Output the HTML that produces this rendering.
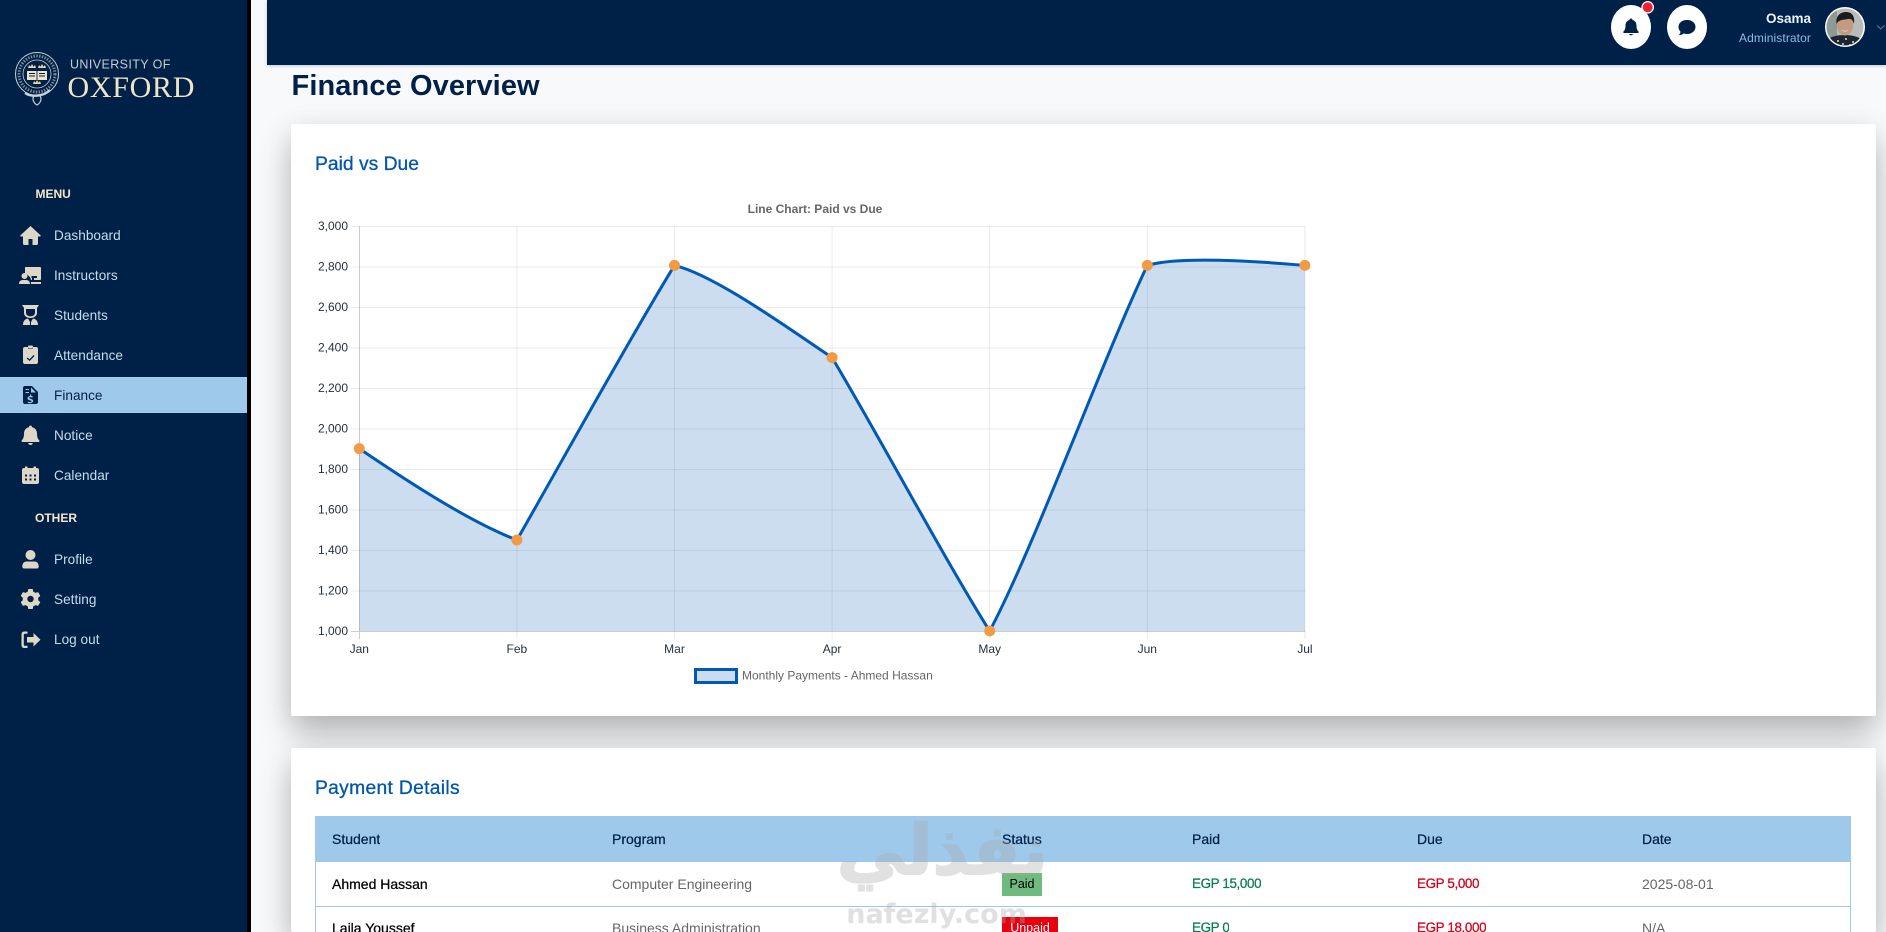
<!DOCTYPE html>
<html lang="en">
<head>
<meta charset="utf-8">
<title>Finance Overview</title>
<style>
html,body{margin:0;padding:0;width:1886px;height:932px;overflow:hidden;background:#f8f9fb;font-family:"Liberation Sans",Arial,sans-serif}
#wrap{position:relative;width:1886px;height:932px;overflow:hidden;background:#f8f9fb}
.a{position:absolute}
.t{position:absolute;white-space:nowrap;line-height:20px;height:20px;overflow:hidden}
#side{left:0;top:0;width:247px;height:932px;background:#002147;z-index:5}
#strip{left:247px;top:0;width:4px;height:932px;background:#000;z-index:5}
#top{left:267px;top:0;width:1619px;height:65px;background:#002147;z-index:4;box-shadow:0 1px 3px rgba(0,60,120,.25)}
.card{background:#fff;left:291px;width:1585px;border-radius:2px;box-shadow:0 18px 32px rgba(0,0,0,.26),0 0 30px rgba(0,0,0,.05)}
.nav{left:54px;font-size:13.6px;color:#c6dcee;letter-spacing:.02px;z-index:6}
.sec{font-size:12px;font-weight:bold;color:#f5e6cc;z-index:6}
.h2{left:315px;font-size:19.3px;color:#0056a8;-webkit-text-stroke:.3px #0056a8;height:24px;line-height:24px}
.th{font-size:14px;color:#002147;-webkit-text-stroke:.25px #002147;top:829px;z-index:2}
.td{font-size:14px;z-index:2;color:#666}
.st{color:#000;-webkit-text-stroke:.25px #000}
.gr{color:#0a7d50;-webkit-text-stroke:.25px #0a7d50;font-size:13.4px;letter-spacing:-.35px}
.rd{color:#d0021b;-webkit-text-stroke:.25px #d0021b;font-size:13.4px;letter-spacing:-.35px}
.circ{width:40px;height:44px;border-radius:50%;background:#fff;top:5px;z-index:6}
svg text{font-family:"Liberation Sans",Arial,sans-serif}
</style>
</head>
<body>
<div id="wrap">
<div class="a" id="side"></div>
<div class="a" id="strip"></div>
<div class="a" id="top"></div>

<div class="a card" style="top:124px;height:592px"></div>
<div class="a card" style="top:748px;height:184px"></div>

<div class="t" style="left:291.500px;top:70px;height:32px;line-height:32px;font-size:29px;font-weight:bold;color:#002147;letter-spacing:.1px">Finance Overview</div>
<div class="t h2" style="top:153px">Paid vs Due</div>
<div class="t h2" style="top:776.500px;letter-spacing:.3px">Payment Details</div>

<!-- Chart -->
<svg class="a" style="left:0;top:0;z-index:1" width="1886" height="932" viewBox="0 0 1886 932">
  <g stroke="rgba(0,0,0,.08)" stroke-width="1" fill="none">
    <path d="M351 226.5H1305M351 267H1305M351 307.5H1305M351 348H1305M351 388.5H1305M351 429H1305M351 469.5H1305M351 510H1305M351 550.5H1305M351 591H1305"/>
    <path d="M516.9 226V639M674.5 226V639M832.1 226V639M989.7 226V639M1147.3 226V639M1304.9 226V639"/>
  </g>
  <path d="M359.5 226V639M351 631.5H1305" stroke="rgba(0,0,0,.2)" stroke-width="1" fill="none"/>
  <path fill="rgba(0,86,179,.2)" d="M359.3 448.6C410 483 470 522 516.9 540C557 470 634.5 330 674.5 265.4C715 275 790 329.5 832.1 357.6C880 438 945 560 989.7 631C1034.7 546 1102.3 360 1147.3 265.4C1172 258 1225 258.500 1304.9 265.4L1304.9 631L359.3 631Z"/>
  <path fill="none" stroke="#0059b3" stroke-width="3" d="M359.3 448.6C410 483 470 522 516.9 540C557 470 634.5 330 674.5 265.4C715 275 790 329.5 832.1 357.6C880 438 945 560 989.7 631C1034.7 546 1102.3 360 1147.3 265.4C1172 258 1225 258.500 1304.9 265.4"/>
  <g fill="#f29b45">
    <circle cx="359.3" cy="448.6" r="5.5"/><circle cx="516.9" cy="540" r="5.5"/><circle cx="674.5" cy="265.4" r="5.5"/><circle cx="832.1" cy="357.6" r="5.5"/><circle cx="989.7" cy="631" r="5.5"/><circle cx="1147.3" cy="265.4" r="5.5"/><circle cx="1304.9" cy="265.4" r="5.5"/>
  </g>
  <g font-size="12" fill="#26303f" text-anchor="end">
    <text x="348" y="230">3,000</text><text x="348" y="270.5">2,800</text><text x="348" y="311">2,600</text><text x="348" y="351.5">2,400</text><text x="348" y="392">2,200</text><text x="348" y="432.5">2,000</text><text x="348" y="473">1,800</text><text x="348" y="513.5">1,600</text><text x="348" y="554">1,400</text><text x="348" y="594.5">1,200</text><text x="348" y="635">1,000</text>
  </g>
  <g font-size="12" fill="#26303f" text-anchor="middle">
    <text x="359.3" y="653">Jan</text><text x="516.9" y="653">Feb</text><text x="674.5" y="653">Mar</text><text x="832.1" y="653">Apr</text><text x="989.7" y="653">May</text><text x="1147.3" y="653">Jun</text><text x="1304.9" y="653">Jul</text>
  </g>
  <text x="815" y="213" font-size="12" font-weight="bold" fill="#666" text-anchor="middle">Line Chart: Paid vs Due</text>
  <rect x="695.5" y="669.5" width="41" height="13" fill="#ccdcf0" stroke="#0059b3" stroke-width="3"/>
  <text x="742" y="679.5" font-size="12" fill="#666">Monthly Payments - Ahmed Hassan</text>
</svg>

<!-- Table -->
<div class="a" style="left:315px;top:816px;width:1536px;height:46px;background:#9fc9ea;z-index:1"></div>
<div class="a" style="left:315px;top:862px;width:1534px;height:70px;border-left:1px solid #9fc9ea;border-right:1px solid #9fc9ea;z-index:1"></div>
<div class="a" style="left:315px;top:906px;width:1536px;height:1px;background:#9fc9ea;z-index:1"></div>
<div class="t th" style="left:332px">Student</div>
<div class="t th" style="left:612px">Program</div>
<div class="t th" style="left:1002px">Status</div>
<div class="t th" style="left:1192px">Paid</div>
<div class="t th" style="left:1417px">Due</div>
<div class="t th" style="left:1642px">Date</div>

<div class="t td st" style="left:332px;top:874px">Ahmed Hassan</div>
<div class="t td" style="left:612px;top:874px">Computer Engineering</div>
<div class="a" style="left:1002px;top:873px;width:40px;height:23px;background:#6fba7f;z-index:2;color:#000;font-size:12.5px;line-height:23px;text-align:center">Paid</div>
<div class="t td gr" style="left:1192px;top:874px">EGP 15,000</div>
<div class="t td rd" style="left:1417px;top:874px">EGP 5,000</div>
<div class="t td" style="left:1642px;top:874px">2025-08-01</div>

<div class="t td st" style="left:332px;top:918px;height:14px">Laila Youssef</div>
<div class="t td" style="left:612px;top:918px;height:14px">Business Administration</div>
<div class="a" style="left:1002px;top:917px;width:56px;height:15px;overflow:hidden;background:#e8000f;z-index:2;color:#fff;font-size:12.5px;line-height:23px;text-align:center">Unpaid</div>
<div class="t td gr" style="left:1192px;top:918px;height:14px">EGP 0</div>
<div class="t td rd" style="left:1417px;top:918px;height:14px">EGP 18,000</div>
<div class="t td" style="left:1642px;top:918px;height:14px">N/A</div>

<!-- Watermark -->
<div class="a" dir="rtl" style="left:810px;top:806px;width:265px;height:90px;text-align:center;font:bold 69px/90px 'DejaVu Sans',sans-serif;color:#aaa;-webkit-text-stroke:2px #aaa;opacity:.34;z-index:3;white-space:nowrap">نفذلي</div>
<div class="a" style="left:804px;top:895px;width:265px;height:37px;overflow:hidden;text-align:center;font:bold 27px/40px 'DejaVu Sans',sans-serif;color:#aaa;opacity:.36;z-index:3;white-space:nowrap">nafezly.com</div>

<!-- Active nav background -->
<div class="a" style="left:0;top:377px;width:247px;height:36px;background:#9fc9ea;z-index:5"></div>

<!-- Logo -->
<svg class="a" style="left:0;top:0;z-index:6" width="247" height="130" viewBox="0 0 247 130">
  <g fill="none" stroke="#c9d2d4">
    <circle cx="37" cy="74" r="21.5" stroke-width="1"/>
    <circle cx="37" cy="74" r="18" stroke-width="3" stroke-dasharray="1.4 1.4" opacity=".6"/>
    <circle cx="37" cy="74" r="14" stroke-width=".8"/>
  </g>
  <path d="M27 71h20v9H27z" fill="#efe3c9"/>
  <path d="M37 71v9M29 73.5h6M29 76h6M39 73.5h6M39 76h6" stroke="#002147" stroke-width=".9"/>
  <path d="M28 68l1-3 1.6 1.6L32 64l1.4 2.6L35 65l1 3zM38 68l1-3 1.6 1.6L42 64l1.4 2.6L45 65l1 3zM33 84l1-3 1.6 1.6L37 80l1.4 2.6L40 81l1 3z" fill="#e6d5a8"/>
  <path d="M25 93c6 4 18 4 25-3" fill="none" stroke="#c9d2d4" stroke-width="2.4"/>
  <path d="M37 95c3 0 4 1.500 4 4s-2 5-4 6c-2-1-4-3.500-4-6s1-4 4-4z" fill="none" stroke="#c9d2d4" stroke-width="1.2"/>
  <text x="70" y="68.500" font-size="12.500" letter-spacing=".4" fill="#c5cdd0">UNIVERSITY OF</text>
  <text x="67.500" y="97" font-size="30" letter-spacing=".7" fill="#f0e3c8" style="font-family:'Liberation Serif',serif">OXFORD</text>
</svg>

<!-- Sidebar text -->
<div class="t sec" style="left:35.500px;top:184px">MENU</div>
<div class="t nav" style="top:226px">Dashboard</div>
<div class="t nav" style="top:266px">Instructors</div>
<div class="t nav" style="top:306px">Students</div>
<div class="t nav" style="top:346px">Attendance</div>
<div class="t nav" style="top:386px;color:#002147">Finance</div>
<div class="t nav" style="top:426px">Notice</div>
<div class="t nav" style="top:466px">Calendar</div>
<div class="t sec" style="left:35px;top:507.500px">OTHER</div>
<div class="t nav" style="top:550px">Profile</div>
<div class="t nav" style="top:590px">Setting</div>
<div class="t nav" style="top:630px">Log out</div>

<!-- Sidebar icons -->
<svg class="a" style="left:0;top:0;z-index:7" width="60" height="660" viewBox="0 0 60 660" fill="#ded6c6">
  <!-- house -->
  <path fill-rule="evenodd" d="M30.500 226L40.500 235.300C41 236 40.600 236.500 40 236.500H38V243.500C38 244.400 37.400 245 36.500 245H24.500C23.600 245 23 244.400 23 243.500V236.500H21C20.400 236.500 20 236 20.500 235.300ZM28.500 239V245H32.500V239Z"/>
  <!-- chalkboard user -->
  <path d="M25 267.500C25 267 25.500 267 26 267H40C40.700 267 41 267.400 41 268V279C41 279.600 40.700 280 40 280H34V278H37V276H31.500V278H32V280H31C30.500 277.500 29.500 276 28 275.500V275C26.500 274.500 25.500 274 25 273Z"/>
  <circle cx="24.500" cy="276" r="3"/>
  <path d="M19 284C19 281 21 280 23 280H26C28.500 280 30 281.500 30 284ZM31 282H41V284H31Z"/>
  <!-- student -->
  <path d="M22 305H39L37 308V313C37 316 34 318 30.500 318C27 318 24 316 24 313V308ZM26 309V312.500C26 315 28 316.300 30.500 316.300C33 316.300 35 315 35 312.500V309Z" fill-rule="evenodd"/>
  <path d="M23 325C23 321 25 319 28 318.500L30 322V325ZM38 325C38 321 36 319 33 318.500L31 322V325Z"/>
  <!-- clipboard -->
  <path fill-rule="evenodd" d="M25 347H28V348.500H33V347H36C37.200 347 38 347.800 38 349V362C38 363.200 37.200 364 36 364H25C23.800 364 23 363.200 23 362V349C23 347.800 23.800 347 25 347ZM33.500 355L29.600 359.300L27.500 357.500L26.600 358.500L29.700 361L34.500 356Z"/>
  <rect x="28" y="345.500" width="5" height="2.500" rx="1"/>
  <!-- file invoice dollar -->
  <path fill="#002147" fill-rule="evenodd" d="M25 386H32L38 392V402C38 403.200 37.200 404 36 404H25C23.800 404 23 403.200 23 402V388C23 386.800 23.800 386 25 386ZM25.500 389V390H29V389ZM25.500 392V393H29V392ZM31 387.500V392.500H36ZM30 394.500V396C28.500 396.300 27.500 397.100 27.500 398.300C27.500 399.800 29 400.100 30.300 400.500C31.100 400.700 31.600 400.900 31.600 401.300C31.600 401.900 30.900 402.100 30.200 402.100C29.400 402.100 28.600 401.900 28 401.600L27.600 402.800C28.200 403.100 29.100 403.300 30 403.300H31.200V402.900C32.300 402.600 33.200 402 33.200 400.900C33.200 399.500 31.800 399.100 30.500 398.700C29.700 398.500 29.100 398.300 29.100 397.900C29.100 397.400 29.800 397.200 30.400 397.200C31.100 397.200 31.800 397.300 32.400 397.600L32.800 396.400C32.400 396.200 31.800 396.100 31.200 396V394.500Z"/>
  <!-- bell -->
  <path d="M30.500 425.500C31.500 425.500 32 426.200 32 427.100C35.200 427.800 37 430.500 37 433.500C37 437 37.800 439 39.200 440.300C39.800 441 39.500 442 38.500 442H22.500C21.500 442 21.200 441 21.800 440.300C23.200 439 24 437 24 433.500C24 430.500 25.800 427.800 29 427.100C29 426.200 29.500 425.500 30.500 425.500ZM28.200 443H32.800C32.600 444.200 31.700 445 30.500 445C29.300 445 28.400 444.200 28.200 443Z"/>
  <!-- calendar -->
  <path fill-rule="evenodd" d="M25 466.500H27.500V468H33.500V466.500H36V468H37C38.200 468 39 468.800 39 470V482C39 483.200 38.200 484 37 484H24C22.800 484 22 483.200 22 482V470C22 468.800 22.800 468 24 468H25ZM25 474.500V476.500H27V474.500ZM29.500 474.500V476.500H31.500V474.500ZM34 474.500V476.500H36V474.500ZM25 478.500V480.500H27V478.500ZM29.500 478.500V480.500H31.500V478.500ZM34 478.500V480.500H36V478.500Z"/>
  <!-- user -->
  <circle cx="30.500" cy="555" r="5"/>
  <path d="M26.500 561.500H34.500C37 561.500 38.700 563.500 38.700 566.500C38.700 567.500 38 568.500 37 568.500H24C23 568.500 22.300 567.500 22.300 566.500C22.300 563.500 24 561.500 26.500 561.500Z"/>
  <!-- gear -->
  <path fill-rule="evenodd" d="M28.300 589H32.700L33.300 591.700C34.100 592 34.800 592.400 35.400 592.900L38.100 592.100L40.300 595.900L38.200 597.800C38.300 598.600 38.300 599.400 38.200 600.200L40.300 602.100L38.100 605.900L35.400 605.100C34.800 605.600 34.100 606 33.300 606.300L32.700 609H28.300L27.700 606.300C26.900 606 26.200 605.600 25.600 605.100L22.900 605.900L20.700 602.100L22.800 600.200C22.700 599.400 22.700 598.600 22.800 597.800L20.700 595.900L22.900 592.100L25.600 592.900C26.200 592.400 26.900 592 27.700 591.700ZM30.500 595.800A3.200 3.200 0 1 0 30.500 602.200A3.200 3.200 0 1 0 30.500 595.800Z"/>
  <!-- logout -->
  <path d="M27.500 631.500H24.500C22.500 631.500 21.500 632.500 21.500 634.500V645C21.500 647 22.500 648 24.500 648H27.500V645.800H25C24.200 645.800 23.800 645.400 23.800 644.600V634.900C23.800 634.100 24.200 633.700 25 633.700H27.500Z"/>
  <path d="M33.500 633L40.500 639.700L33.500 646.500V642.500H27V637H33.500Z"/>
</svg>

<!-- Top bar right -->
<div class="a circ" style="left:1611px"></div>
<div class="a circ" style="left:1667px"></div>
<svg class="a" style="left:1600px;top:0;z-index:7" width="286" height="65" viewBox="1600 0 286 65">
  <path fill="#002147" d="M1631 18.500C1632 18.500 1632.500 19.200 1632.500 20C1635 20.600 1636.500 22.700 1636.500 25.500C1636.500 28.800 1637.200 30.300 1638.500 31.500C1639 32.100 1638.700 33 1637.800 33H1624.200C1623.300 33 1623 32.100 1623.500 31.500C1624.800 30.300 1625.500 28.800 1625.500 25.500C1625.500 22.700 1627 20.600 1629.500 20C1629.500 19.200 1630 18.500 1631 18.500ZM1629 34H1633C1632.800 34.800 1632 35.300 1631 35.300C1630 35.300 1629.200 34.800 1629 34Z"/>
  <circle cx="1647.700" cy="7.300" r="6.300" fill="#fff"/>
  <circle cx="1647.700" cy="7.300" r="5" fill="#ee2233"/>
  <path fill="#002147" d="M1687 20C1692.500 20 1695.500 23.200 1695.500 27C1695.500 30.800 1692 34 1687 34C1685.700 34 1684.700 33.800 1683.700 33.400C1682.500 34.500 1680.800 35.200 1678.800 35.200C1680 33.900 1680.400 32.700 1680.500 31.600C1679.200 30.500 1678.500 28.900 1678.500 27C1678.500 23.200 1681.500 20 1687 20Z"/>
  <defs><clipPath id="av"><circle cx="1845" cy="27" r="18.500"/></clipPath></defs>
  <circle cx="1845" cy="27" r="20" fill="#fff"/>
  <g clip-path="url(#av)">
    <rect x="1825" y="7" width="40" height="40" fill="#b9bcb9"/>
    <rect x="1825" y="7" width="12" height="40" fill="#8d9a95"/>
    <path d="M1825 47V41C1830 37 1836 35 1845 35C1853 35 1860 37 1865 42V47Z" fill="#1c2530"/>
    <circle cx="1838" cy="41" r="1" fill="#dde"/><circle cx="1846" cy="39" r="1" fill="#dde"/><circle cx="1853" cy="42" r="1" fill="#dde"/><circle cx="1843" cy="44" r="1" fill="#dde"/><circle cx="1850" cy="45" r="1" fill="#dde"/>
    <ellipse cx="1845" cy="25" rx="8" ry="10.500" fill="#c49a80"/>
    <path d="M1836.500 24C1835.500 15 1841 12 1846 12C1852 12 1855 16 1854 24C1853 20 1851 18.500 1848 19C1844 20 1839 19 1836.500 24Z" fill="#1c1a1c"/>
    <path d="M1841 30C1843 32 1847 32 1849 30C1847 31 1843 31 1841 30Z" fill="#eee"/>
  </g>
  <path d="M1877 25.500L1880.700 29L1884.500 25.500" fill="none" stroke="#5f7d9b" stroke-width="1"/>
</svg>
<div class="t" style="right:75px;top:9px;font-size:13.500px;font-weight:bold;color:#eaf2fa;z-index:6">Osama</div>
<div class="t" style="right:75px;top:28px;font-size:12px;color:#8dbde6;z-index:6;letter-spacing:.1px">Administrator</div>
</div>
</body>
</html>
